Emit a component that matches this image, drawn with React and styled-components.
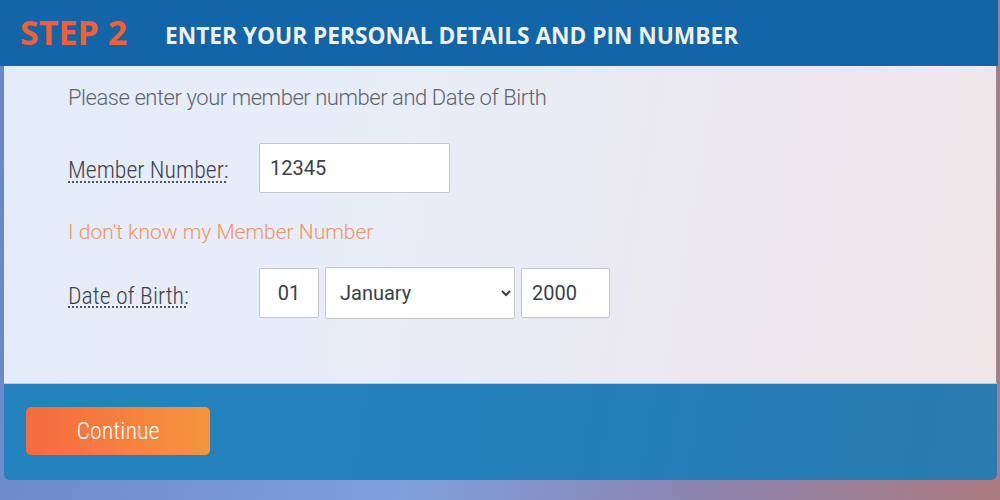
import React from "react";
import styled, { createGlobalStyle } from "styled-components";

const GlobalStyle = createGlobalStyle`
  html, body {
    margin: 0;
    padding: 0;
  }
  body {
    width: 1000px;
    height: 500px;
    overflow: hidden;
    background: linear-gradient(100deg, #6a86c6 0%, #7fa0dc 45%, #8b86b4 70%, #ab7b7f 100%);
    font-family: Roboto, "Liberation Sans", sans-serif;
  }
`;

const Page = styled.div`
  width: 1000px;
  height: 500px;
  display: flex;
  flex-direction: column;
`;

const Header = styled.div`
  height: 66px;
  width: 998px;
  background: #1265a6;
  display: flex;
  align-items: center;
  padding-left: 20px;
  box-sizing: border-box;
  font-family: "Open Sans", "Liberation Sans", sans-serif;
  font-weight: 700;
`;

const Step = styled.span`
  color: #ec6139;
  font-size: 34px;
  width: 145px;
  line-height: 1;
  margin-top: -2px;
`;

const Title = styled.span`
  color: #f0f0f2;
  font-size: 22.7px;
  line-height: 1;
  margin-top: 7px;
`;

const Card = styled.div`
  margin: 0 3px 0 4px;
  display: flex;
  flex-direction: column;
`;

const FormArea = styled.div`
  height: 317px;
  box-sizing: border-box;
  padding: 20px 0 0 64px;
  background: linear-gradient(100deg, #e4ecf9 0%, #e8edf8 40%, #ebe8f0 70%, #f0e6e8 100%);
  border-right: 1px solid #9c8a94;
`;

const Intro = styled.p`
  margin: 0 0 33px;
  font-size: 22px;
  letter-spacing: -0.45px;
  font-weight: 300;
  color: #60646c;
  line-height: 24px;
`;

const Row = styled.div`
  display: flex;
  align-items: center;
  gap: 6px;
  margin-bottom: ${(p) => p.$gap || 0}px;
`;

const Label = styled.abbr`
  width: 185px;
  padding-top: ${(p) => p.$drop || 4}px;
  font-family: "Roboto Condensed", "Liberation Sans Narrow", Roboto, sans-serif;
  font-stretch: condensed;
  font-weight: 300;
  font-size: 23.8px;
  color: #3e424b;
  text-decoration: underline dotted #555;
  text-underline-offset: 3px;
  text-decoration-thickness: 1.5px;
`;

const Field = styled.input`
  box-sizing: border-box;
  width: ${(p) => p.$w}px;
  height: 50px;
  border: 1px solid #c4c6cb;
  border-radius: 2px;
  background: #fff;
  font-family: Roboto, sans-serif;
  font-size: 20px;
  color: #3b3f47;
  padding: 0 10px;
  text-align: ${(p) => (p.$center ? "center" : "left")};
  outline: none;
`;

const Select = styled.select`
  box-sizing: border-box;
  width: 190px;
  height: 52px;
  border: 1px solid #c4c6cb;
  border-radius: 2px;
  background: #fff;
  font-family: Roboto, sans-serif;
  font-size: 20px;
  color: #3b3f47;
  padding: 0 10px;
  outline: none;
`;

const Forgot = styled.a`
  display: block;
  font-size: 21px;
  font-weight: 300;
  color: #f3935f;
  text-decoration: none;
  line-height: 24px;
  margin-bottom: 23px;
`;

const Footer = styled.div`
  height: 97px;
  background: linear-gradient(100deg, #2382bd 0%, #247fb8 60%, #2a7bb0 100%);
  border-radius: 0 0 6px 6px;
  border-top: 1px solid #b8cbe2;
  box-sizing: border-box;
  padding: 23px 0 0 22px;
`;

const Button = styled.button`
  width: 184px;
  height: 48px;
  border: none;
  border-radius: 5px;
  background: linear-gradient(90deg, #f56a3f 0%, #f4953f 100%);
  color: #fff;
  font-family: "Roboto Condensed", "Liberation Sans Narrow", Roboto, sans-serif;
  font-stretch: condensed;
  font-weight: 300;
  font-size: 24px;
  cursor: pointer;
`;

export default function App() {
  return (
    <Page>
      <GlobalStyle />
      <Header>
        <Step>STEP 2</Step>
        <Title>ENTER YOUR PERSONAL DETAILS AND PIN NUMBER</Title>
      </Header>
      <Card>
        <FormArea>
          <Intro>Please enter your member number and Date of Birth</Intro>
          <Row $gap={27}>
            <Label title="Your member number">Member Number:</Label>
            <Field $w={191} defaultValue="12345" />
          </Row>
          <Forgot href="#">I don't know my Member Number</Forgot>
          <Row>
            <Label $drop={5} title="Your date of birth">Date of Birth:</Label>
            <Field $w={60} defaultValue="01" $center />
            <Select defaultValue="January">
              <option>January</option>
              <option>February</option>
              <option>March</option>
            </Select>
            <Field $w={89} defaultValue="2000" />
          </Row>
        </FormArea>
        <Footer>
          <Button>Continue</Button>
        </Footer>
      </Card>
    </Page>
  );
}
